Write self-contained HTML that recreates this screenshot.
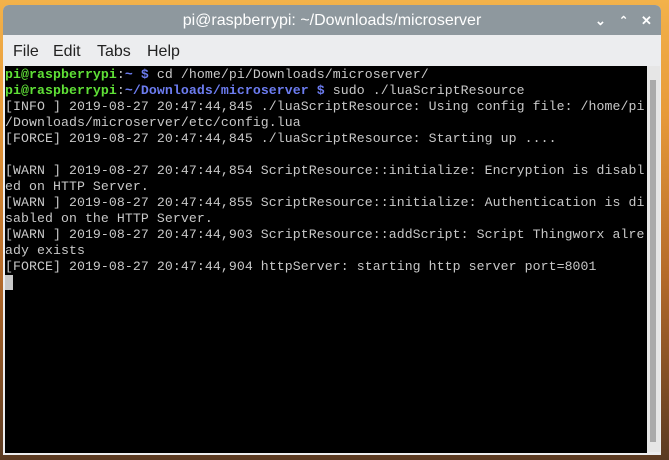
<!DOCTYPE html>
<html><head><meta charset="utf-8"><style>
html,body{margin:0;padding:0;width:669px;height:460px;overflow:hidden;}
body{background:linear-gradient(180deg,#f3b24a 0%,#e79a3a 25%,#b46a2a 60%,#5a3a22 100%);position:relative;font-family:"Liberation Sans",sans-serif;}
.win{position:absolute;left:3px;top:5px;width:658px;height:450px;background:#ecedef;border-radius:6px 6px 0 0;overflow:hidden;}
.title{height:30px;background:#8e989e;color:#fff;font-size:16px;line-height:32px;text-align:center;}
.ctl{position:absolute;top:1px;height:30px;line-height:30px;color:#fff;font-size:13px;font-weight:bold;}
.menu{height:30px;line-height:33px;font-size:16px;color:#222;position:relative;}
.menu span{position:absolute;top:0}
.term{position:absolute;left:2px;top:61px;width:642px;height:386px;background:#000;font-family:"Liberation Mono",monospace;font-size:13.2px;letter-spacing:0.08px;line-height:16px;color:#c8c8c8;white-space:pre;padding-top:1px;overflow:hidden;}
.g{color:#5fe036;font-weight:bold}.b{color:#6c7cf0;font-weight:bold}
.sb{position:absolute;left:644px;top:61px;width:13px;height:386px;background:#e6e6e6;}
.th{position:absolute;left:3px;top:14px;width:6px;height:362px;background:#aaa;}
.cur{display:inline-block;width:8px;height:15px;background:#c8c8c8;vertical-align:top}
</style></head><body>
<div class="win">
<div class="title">pi@raspberrypi: ~/Downloads/microserver</div>
<div class="ctl" style="left:592px">&#8964;</div>
<div class="ctl" style="left:616px;font-size:11px">&#8963;</div>
<div class="ctl" style="left:638px">&#10005;</div>
<div class="menu"><span style="left:10px">File</span><span style="left:50px">Edit</span><span style="left:94px">Tabs</span><span style="left:144px">Help</span></div>
<div class="term"><span class="g">pi@raspberrypi</span>:<span class="b">~ $</span> cd /home/pi/Downloads/microserver/
<span class="g">pi@raspberrypi</span>:<span class="b">~/Downloads/microserver $</span> sudo ./luaScriptResource
[INFO ] 2019-08-27 20:47:44,845 ./luaScriptResource: Using config file: /home/pi
/Downloads/microserver/etc/config.lua
[FORCE] 2019-08-27 20:47:44,845 ./luaScriptResource: Starting up ....

[WARN ] 2019-08-27 20:47:44,854 ScriptResource::initialize: Encryption is disabl
ed on HTTP Server.
[WARN ] 2019-08-27 20:47:44,855 ScriptResource::initialize: Authentication is di
sabled on the HTTP Server.
[WARN ] 2019-08-27 20:47:44,903 ScriptResource::addScript: Script Thingworx alre
ady exists
[FORCE] 2019-08-27 20:47:44,904 httpServer: starting http server port=8001
<span class="cur"></span></div>
<div class="sb"><div class="th"></div></div>
</div>
</body></html>
